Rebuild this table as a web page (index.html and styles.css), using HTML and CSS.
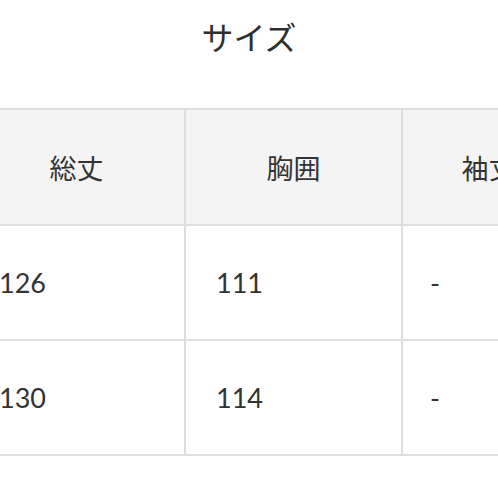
FILE: index.html
```html
<!DOCTYPE html>
<html lang="ja">
<head>
<meta charset="utf-8">
<link rel="stylesheet" href="styles.css">
</head>
<body>
<div class="page">
  <h2 class="title">サイズ</h2>
  <div class="table-wrap">
    <table class="size-table">
      <colgroup>
        <col class="col-wide">
        <col class="col-wide">
        <col class="col-narrow">
      </colgroup>
      <thead>
        <tr class="head-row">
          <th>総丈</th>
          <th>胸囲</th>
          <th>袖丈</th>
        </tr>
      </thead>
      <tbody>
        <tr class="data-row">
          <td>126</td>
          <td>111</td>
          <td>-</td>
        </tr>
        <tr class="data-row">
          <td>130</td>
          <td>114</td>
          <td>-</td>
        </tr>
      </tbody>
    </table>
  </div>
</div>
</body>
</html>
```

FILE: styles.css
```css
html, body {
  margin: 0;
  padding: 0;
  background: #ffffff;
}

.page {
  width: 498px;
  height: 498px;
  overflow: hidden;
  font-family: "Lato", "Noto Sans CJK JP", sans-serif;
  color: #333333;
}

.title {
  margin: 0;
  height: 108px;
  padding-top: 14px;
  box-sizing: border-box;
  text-align: center;
  font-family: "Noto Sans CJK JP", sans-serif;
  font-weight: 400;
  font-size: 32px;
  line-height: 44px;
  color: #2e2e2e;
}

.table-wrap {
  width: 498px;
  overflow: hidden;
}

.size-table {
  margin-left: -33px;
  width: 607px;
  table-layout: fixed;
  border-collapse: collapse;
}

.col-wide {
  width: 217px;
}

.col-narrow {
  width: 173px;
}

.size-table th,
.size-table td {
  border: 2px solid #dedede;
  padding: 0;
  font-weight: 400;
}

.head-row {
  height: 116px;
  background: #f4f4f4;
}

.head-row th {
  text-align: center;
  font-family: "Noto Sans CJK JP", sans-serif;
  font-size: 27px;
  color: #333333;
}

.data-row {
  height: 115px;
}

.data-row td {
  text-align: left;
  padding-left: 30px;
  font-size: 27px;
  color: #333333;
}

.data-row td:last-child {
  padding-left: 27px;
}
```
